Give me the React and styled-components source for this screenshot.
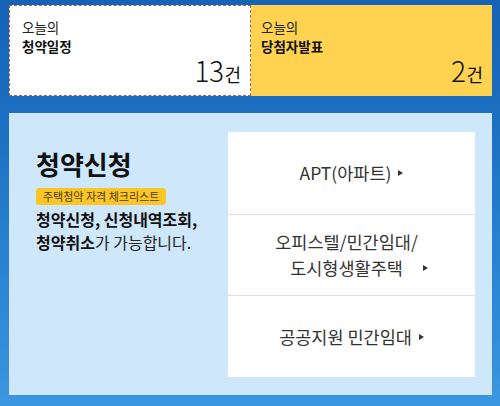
import React from "react";
import styled, { createGlobalStyle } from "styled-components";

const GlobalStyle = createGlobalStyle`
  html, body { margin: 0; padding: 0; }
  body {
    background: linear-gradient(180deg, #1463b4 0%, #1d72c4 35%, #2d89d7 75%, #3b97df 100%);
    font-family: "Noto Sans CJK KR", "Noto Sans", sans-serif;
    color: #222;
  }
  * { box-sizing: border-box; }
`;

const Page = styled.div`
  width: 500px;
  height: 406px;
  padding: 5px 8px 11px 9px;
  display: flex;
  flex-direction: column;
  gap: 17px;
`;

const CardRow = styled.div`
  display: grid;
  grid-template-columns: 242px 1fr;
  height: 91px;
`;

const Card = styled.div`
  display: flex;
  flex-direction: column;
  padding: ${(p) => (p.$focused ? "12px 9px 6px 12px" : "13px 9px 7px 10px")};
  background: ${(p) => (p.$tone === "yellow" ? "#ffd34f" : "#ffffff")};
  border: ${(p) => (p.$focused ? "1px dashed #a45a55" : "none")};
`;

const Label = styled.div`
  font-size: 13.5px;
  line-height: 19px;
  color: #222;
`;

const Title = styled.div`
  font-size: 13.5px;
  line-height: 19px;
  font-weight: 700;
  color: #111;
`;

const Count = styled.div`
  margin-top: auto;
  text-align: right;
  color: #111;
  line-height: 28px;
`;

const Num = styled.span`
  font-size: 28px;
  font-weight: 300;
  letter-spacing: -0.5px;
`;

const Unit = styled.span`
  font-size: 18px;
  margin-left: 1px;
`;

const Panel = styled.section`
  flex: 1;
  background: #cfe7fb;
  display: flex;
  justify-content: space-between;
  padding: 19px 17px 18px 27px;
`;

const Intro = styled.div`
  padding-top: 16px;
  display: flex;
  flex-direction: column;
  align-items: flex-start;
`;

const Heading = styled.h2`
  margin: 0;
  font-size: 26px;
  line-height: 32px;
  font-weight: 700;
  color: #111;
`;

const Badge = styled.span`
  margin-top: 8px;
  background: #fcc526;
  color: #4a3d10;
  font-size: 11px;
  line-height: 17px;
  padding: 0 7px;
  border-radius: 3px;
  white-space: nowrap;
`;

const Desc = styled.p`
  margin: 3px 0 0;
  font-size: 16px;
  line-height: 23px;
  color: #222;
`;

const Strong = styled.b`
  font-weight: 700;
  color: #111;
`;

const Menu = styled.nav`
  width: 247px;
  background: #ffffff;
  display: grid;
  grid-template-rows: 1fr 1fr 1fr;
`;

const MenuItem = styled.a`
  display: flex;
  align-items: center;
  justify-content: center;
  gap: 7px;
  color: #333;
  text-decoration: none;
  font-size: 17.5px;
  line-height: 26px;
  border-top: ${(p) => (p.$first ? "none" : "1px solid #dedede")};
`;

const ItemText = styled.span`
  text-align: center;
`;

const Arrow = styled.span`
  width: 0;
  height: 0;
  border-left: 5px solid #333;
  border-top: 3.5px solid transparent;
  border-bottom: 3.5px solid transparent;
  align-self: ${(p) => (p.$bottom ? "flex-end" : "center")};
  margin-bottom: ${(p) => (p.$bottom ? "10px" : "0")};
`;

const MultiItem = styled.span`
  display: flex;
  align-items: stretch;
  gap: 5px;
`;

export default function App() {
  return (
    <>
      <GlobalStyle />
      <Page>
        <CardRow>
          <Card $focused>
            <Label>오늘의</Label>
            <Title>청약일정</Title>
            <Count>
              <Num>13</Num>
              <Unit>건</Unit>
            </Count>
          </Card>
          <Card $tone="yellow">
            <Label>오늘의</Label>
            <Title>당첨자발표</Title>
            <Count>
              <Num>2</Num>
              <Unit>건</Unit>
            </Count>
          </Card>
        </CardRow>
        <Panel>
          <Intro>
            <Heading>청약신청</Heading>
            <Badge>주택청약 자격 체크리스트</Badge>
            <Desc>
              <Strong>청약신청, 신청내역조회,</Strong>
              <br />
              <Strong>청약취소</Strong>가 가능합니다.
            </Desc>
          </Intro>
          <Menu>
            <MenuItem href="#" $first>
              <ItemText>APT(아파트)</ItemText>
              <Arrow />
            </MenuItem>
            <MenuItem href="#">
              <MultiItem>
                <ItemText>
                  오피스텔/민간임대/
                  <br />
                  도시형생활주택
                </ItemText>
                <Arrow $bottom />
              </MultiItem>
            </MenuItem>
            <MenuItem href="#">
              <ItemText>공공지원 민간임대</ItemText>
              <Arrow />
            </MenuItem>
          </Menu>
        </Panel>
      </Page>
    </>
  );
}
